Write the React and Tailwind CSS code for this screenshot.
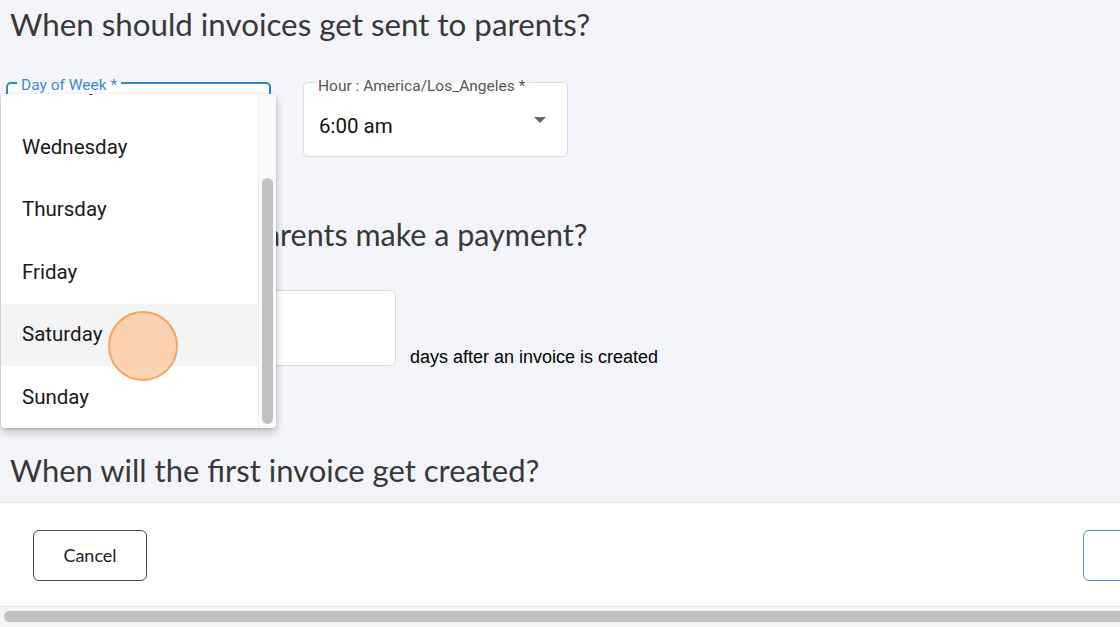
import React from 'react';

const days = ['Monday', 'Tuesday', 'Wednesday', 'Thursday', 'Friday', 'Saturday', 'Sunday'];

export default function App() {
    const heading = { fontFamily: 'Lato, "Open Sans", sans-serif' };
    const mui = { fontFamily: 'Roboto, "Liberation Sans", sans-serif' };

    return (
        <div className="relative w-[1120px] h-[627px] overflow-hidden bg-[#f4f5fa]">
            {/* Main form */}
            <div className="pl-[6px] pt-[6px] h-[502px]">
                <h2 className="pl-[4px] text-[31.3px] leading-[36px] text-[#383838]" style={heading}>
                    When should invoices get sent to parents?
                </h2>

                <div className="mt-[40px] flex gap-[32px]" style={mui}>
                    {/* Day of week (focused) */}
                    <div className="relative w-[265px] h-[75px] rounded-[5px] border-2 border-[#2f86d6] bg-white">
                        <span className="absolute -top-[8px] left-[9px] px-[4px] bg-[linear-gradient(to_bottom,#f4f5fa_44%,#ffffff_44%)] text-[15.5px] leading-[18px] text-[#3a8ad8]">
                            Day of Week *
                        </span>
                    </div>

                    {/* Hour */}
                    <div className="relative w-[265px] h-[75px] rounded-[5px] border border-[#dcdcdc] bg-white">
                        <span className="absolute -top-[6px] left-[10px] px-[4px] bg-[linear-gradient(to_bottom,#f4f5fa_33%,#ffffff_33%)] text-[15.5px] leading-[18px] text-[#555]">
                            Hour : America/Los_Angeles *
                        </span>
                        <div className="flex items-center justify-between h-full pl-[15px] pr-[20px] pt-[14px]">
                            <span className="text-[20.5px] text-[#111]">6:00 am</span>
                            <svg width="14" height="8" viewBox="0 0 14 8" className="-mt-[14px]">
                                <path d="M1 1h12L7 7z" fill="#666" />
                            </svg>
                        </div>
                    </div>
                </div>

                <h2 className="mt-[59px] pl-[4px] text-[30.5px] leading-[36px] text-[#383838]" style={heading}>
                    When should the parents make a payment?
                </h2>

                <div className="mt-[38px] flex items-end">
                    <div className="w-[390px] h-[76px] rounded-[5px] border border-[#dcdcdc] bg-white" />
                    <span className="ml-[14px] mb-[-2px] text-[18px] leading-[22px] text-black" style={{ fontFamily: '"Liberation Sans", Arial, sans-serif' }}>
                        days after an invoice is created
                    </span>
                </div>

                <h2 className="mt-[86px] pl-[4px] text-[31px] leading-[36px] text-[#383838]" style={heading}>
                    When will the first invoice get created?
                </h2>
            </div>

            {/* Footer */}
            <div className="h-[105px] border-t border-[#e3e4e8] bg-white flex items-start pt-[27px] px-[33px] overflow-hidden">
                <button className="w-[114px] h-[51px] rounded-[6px] border border-[#4a4a4a] text-[18px] text-[#222] shrink-0" style={heading}>
                    Cancel
                </button>
                <button className="ml-auto -mr-[116px] w-[120px] h-[51px] rounded-[6px] border border-[#5b8bd8] shrink-0" />
            </div>

            {/* Horizontal scrollbar */}
            <div className="absolute left-0 right-0 bottom-0 h-[21px] border-t border-[#e6e6e6] bg-[#f5f5f5] pt-[4px] pl-[4px]">
                <div className="h-[11px] w-[1130px] rounded-full bg-[#c1c1c1]" />
            </div>

            {/* Dropdown menu */}
            <div className="absolute left-[1px] top-[94px] w-[275px] h-[334px] bg-white rounded-[4px] shadow-[0_4px_10px_rgba(0,0,0,0.22),0_1px_3px_rgba(0,0,0,0.15)] overflow-hidden flex" style={mui}>
                <div className="flex-1 overflow-hidden">
                    <div className="-mt-[103px]">
                        {days.map((d) => (
                            <div
                                key={d}
                                className={`h-[62.5px] flex items-center pl-[21px] text-[20.5px] text-[#1a1a1a] ${d === 'Saturday' ? 'bg-[#f4f4f4]' : ''}`}
                            >
                                {d}
                            </div>
                        ))}
                    </div>
                </div>
                <div className="w-[18px] border-l border-[#ececec] bg-[#fafafa] pt-[84px] pl-[3px]">
                    <div className="w-[11px] h-[246px] rounded-full bg-[#c1c1c1]" />
                </div>
            </div>

            {/* Click indicator */}
            <div className="absolute left-[108px] top-[311px] w-[70px] h-[70px] rounded-full border-2 border-[#f6a560] bg-[#fdc9a0]/80" />
        </div>
    );
}
